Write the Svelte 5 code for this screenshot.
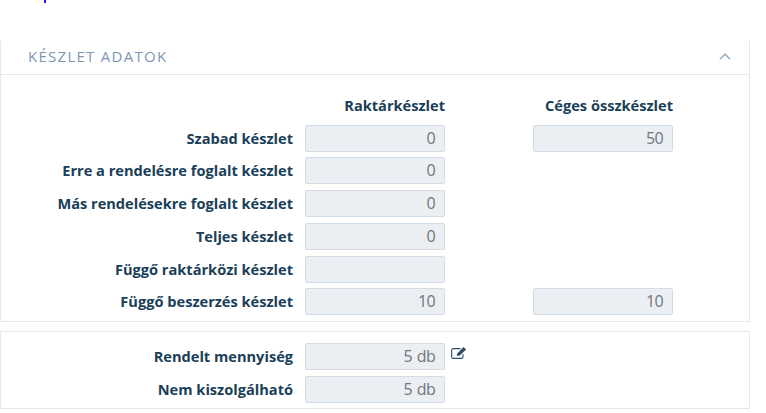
<script>
  const rows = [
    { label: 'Szabad készlet', own: '0', total: '50' },
    { label: 'Erre a rendelésre foglalt készlet', own: '0' },
    { label: 'Más rendelésekre foglalt készlet', own: '0' },
    { label: 'Teljes készlet', own: '0' },
    { label: 'Függő raktárközi készlet', own: '' },
    { label: 'Függő beszerzés készlet', own: '10', total: '10' },
  ]
</script>

<div class="page">
  <div class="top"><span class="dot"></span></div>

  <section class="panel stock">
    <header class="panel-head">
      <h2>KÉSZLET ADATOK</h2>
      <svg class="chevron" width="12" height="7" viewBox="0 0 12 7" fill="none" stroke="#8fa5bd" stroke-width="1.2"><polyline points="0.8 6.3 6 1.2 11.2 6.3" /></svg>
    </header>
    <div class="grid">
      <div class="col-title own">Raktárkészlet</div>
      <div class="col-title total">Céges összkészlet</div>
      {#each rows as row}
        <div class="label">{row.label}</div>
        <div class="field own">{row.own}</div>
        {#if row.total}
          <div class="field total">{row.total}</div>
        {/if}
      {/each}
    </div>
  </section>

  <section class="panel order">
    <div class="label">Rendelt mennyiség</div>
    <div class="field">5 db</div>
    <svg class="edit" width="16" height="14" viewBox="0 0 16 14" fill="none">
      <path d="M12 8.2v2.7a1.5 1.5 0 0 1-1.5 1.5H2.2a1.5 1.5 0 0 1-1.5-1.5V4.1a1.5 1.5 0 0 1 1.5-1.5h7.4" stroke="#2a4e66" stroke-width="1.1" />
      <path d="M5.8 10l.5-2.6L12.5 1.1l2.6 2.4-6.3 6.1z" fill="#2a4e66" />
    </svg>
    <div class="label">Nem kiszolgálható</div>
    <div class="field">5 db</div>
  </section>
</div>

<style>
  :global(body) {
    margin: 0;
    background: #fff;
    font-family: "Open Sans", sans-serif;
  }

  .page {
    width: 766px;
    height: 413px;
    overflow: hidden;
  }

  .top {
    height: 41px;
    padding-left: 44px;
  }

  .dot {
    display: block;
    width: 2px;
    height: 3px;
    background: #1a1af0;
  }

  .panel {
    width: 750px;
    box-sizing: border-box;
    border: 1px solid #e4e9f1;
  }

  .stock {
    height: 281px;
    border-top: none;
  }

  .panel-head {
    height: 34px;
    box-sizing: border-box;
    border-bottom: 1px solid #e4e9f1;
    display: flex;
    align-items: center;
    justify-content: space-between;
    padding: 0 18px 3px 27px;
  }

  h2 {
    margin: 0;
    font-size: 15px;
    font-weight: 400;
    letter-spacing: 1.27px;
    color: #7c97b6;
  }

  .grid {
    display: grid;
    grid-template-columns: 304px 140px 88px 140px;
    row-gap: 5.75px;
    padding-top: 21px;
  }

  .col-title {
    font-size: 14.6px;
    font-weight: 700;
    color: #1a4058;
    text-align: right;
    line-height: 19px;
    padding-bottom: 3.75px;
    white-space: nowrap;
  }

  .own {
    grid-column: 2;
  }

  .total {
    grid-column: 4;
  }

  .label {
    grid-column: 1;
    padding-right: 12px;
    font-size: 14.6px;
    font-weight: 700;
    color: #1a4058;
    text-align: right;
    line-height: 27px;
    white-space: nowrap;
  }

  .field {
    height: 27px;
    box-sizing: border-box;
    border: 1px solid #d3dbe3;
    border-radius: 2px;
    background: #ebeff3;
    color: #6f777e;
    font-size: 16px;
    letter-spacing: -0.7px;
    word-spacing: 1.5px;
    line-height: 25px;
    text-align: right;
    padding: 0 9px;
  }

  .order {
    margin-top: 9px;
    height: 78px;
    display: grid;
    grid-template-columns: 304px 140px 1fr;
    row-gap: 6px;
    padding-top: 11px;
    align-content: start;
  }

  .edit {
    margin: 3px 0 0 6px;
  }
</style>
